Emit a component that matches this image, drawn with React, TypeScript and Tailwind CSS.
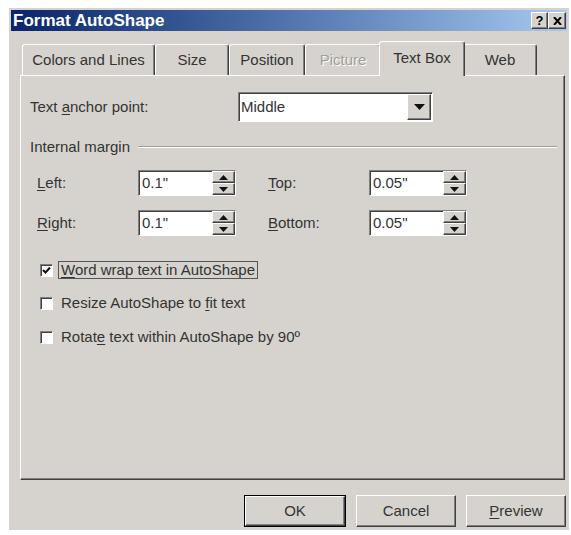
import React from 'react';

// classic 3D edges
const raised =
  'border border-t-white border-l-white border-r-[#404040] border-b-[#404040] shadow-[inset_-1px_-1px_0_#808080]';
const sunken =
  'border border-t-[#808080] border-l-[#808080] border-r-white border-b-white shadow-[inset_1px_1px_0_#404040]';

const Key = ({ children }: { children: React.ReactNode }) => (
  <span className="underline underline-offset-2 decoration-1">{children}</span>
);

type Tab = { label: string; width: string; selected?: boolean; disabled?: boolean };

const tabs: Tab[] = [
  { label: 'Colors and Lines', width: 'w-[133px]' },
  { label: 'Size', width: 'w-[74px]' },
  { label: 'Position', width: 'w-[76px]' },
  { label: 'Picture', width: 'w-[76px]', disabled: true },
  { label: 'Text Box', width: 'w-[86px]', selected: true },
  { label: 'Web', width: 'w-[74px]' },
];

const TabButton = ({ tab }: { tab: Tab }) => {
  if (tab.selected) {
    return (
      <div
        className={`relative z-10 -mx-[2px] -mb-px h-[35px] ${tab.width} flex items-center justify-center rounded-t-[3px] border border-b-0 border-t-white border-l-white border-r-[#404040] bg-[#d6d3ce] pb-[2px] shadow-[inset_-1px_0_0_#808080]`}
      >
        {tab.label}
      </div>
    );
  }
  return (
    <div
      className={`h-[31px] ${tab.width} flex items-center justify-center rounded-t-[3px] border border-b-0 border-t-white border-l-white border-r-[#404040] shadow-[inset_-1px_0_0_#808080] ${
        tab.disabled ? 'text-[#a19d98] [text-shadow:1px_1px_0_#ffffff]' : ''
      }`}
    >
      {tab.label}
    </div>
  );
};

const SpinBox = ({ value }: { value: string }) => (
  <div className={`flex h-[26px] w-[98px] bg-white ${sunken}`}>
    <div className="flex flex-1 items-center pl-[3px]">{value}</div>
    <div className="flex w-[23px] flex-col">
      <div className={`flex flex-1 items-center justify-center bg-[#d6d3ce] ${raised}`}>
        <svg width="9" height="5" viewBox="0 0 9 5">
          <path d="M4.5 0 L9 5 L0 5 Z" fill="#111" />
        </svg>
      </div>
      <div className={`flex flex-1 items-center justify-center bg-[#d6d3ce] ${raised}`}>
        <svg width="9" height="5" viewBox="0 0 9 5">
          <path d="M0 0 L9 0 L4.5 5 Z" fill="#111" />
        </svg>
      </div>
    </div>
  </div>
);

const CheckRow = ({
  checked,
  focused,
  children,
  className,
}: {
  checked?: boolean;
  focused?: boolean;
  children: React.ReactNode;
  className: string;
}) => (
  <div className={`flex h-[18px] items-center pl-[10px] ${className}`}>
    <div className={`flex h-[13px] w-[13px] items-center justify-center bg-white ${sunken}`}>
      {checked && (
        <svg width="9" height="9" viewBox="0 0 9 9">
          <path d="M1 4 L3.5 6.5 L8 1.5" stroke="#111" strokeWidth="2" fill="none" />
        </svg>
      )}
    </div>
    <div
      className={`ml-[5px] flex h-[18px] items-center px-[2px] ${
        focused ? 'border border-[#555]' : 'border border-transparent'
      }`}
    >
      {children}
    </div>
  </div>
);

const DialogButton = ({ children, isDefault }: { children: React.ReactNode; isDefault?: boolean }) => {
  const face = (
    <div className={`flex h-full w-full items-center justify-center bg-[#d6d3ce] ${raised}`}>{children}</div>
  );
  if (isDefault) {
    return <div className="h-[32px] w-[102px] border border-black">{face}</div>;
  }
  return <div className="h-[32px] w-[100px]">{face}</div>;
};

export default function App() {
  return (
    <div className="h-[535px] w-[571px] overflow-hidden bg-white pt-[8px] pl-[9px] font-['Liberation_Sans',Arial,sans-serif] text-[15px] text-[#333]">
      <div className="flex w-[560px] flex-col bg-[#d6d3ce] p-[2px] pb-[3px]">
        {/* caption */}
        <div className="flex h-[21px] items-center justify-between bg-linear-to-r from-[#0a246a] to-[#a6caf0] pl-[2px] pr-[1px]">
          <span className="text-[17px] font-bold text-white">Format AutoShape</span>
          <div className="flex">
            <div className={`flex h-[17px] w-[17px] items-center justify-center bg-[#d6d3ce] text-[13px] font-bold text-black ${raised}`}>
              ?
            </div>
            <div className={`flex h-[17px] w-[18px] items-center justify-center bg-[#d6d3ce] ${raised}`}>
              <svg width="9" height="8" viewBox="0 0 9 8">
                <path d="M1 0 L8 8 M8 0 L1 8" stroke="#000" strokeWidth="2" />
              </svg>
            </div>
          </div>
        </div>

        {/* tab strip */}
        <div className="ml-[9px] mt-[10px] flex h-[34px] items-end pl-[2px]">
          {tabs.map((tab) => (
            <TabButton key={tab.label} tab={tab} />
          ))}
        </div>

        {/* Text Box page */}
        <div className={`ml-[9px] flex h-[405px] w-[545px] flex-col pl-[9px] ${raised}`}>
          <div className="mt-[16px] flex h-[30px] items-center">
            <span className="w-[208px]">
              Text <Key>a</Key>nchor point:
            </span>
            <div className={`flex h-[30px] w-[195px] bg-white ${sunken}`}>
              <div className="flex flex-1 items-center pl-[2px]">Middle</div>
              <div className={`m-[1px] flex w-[24px] items-center justify-center bg-[#d6d3ce] ${raised}`}>
                <svg width="11" height="6" viewBox="0 0 11 6">
                  <path d="M0 0 L11 0 L5.5 6 Z" fill="#111" />
                </svg>
              </div>
            </div>
          </div>

          <div className="mt-[17px] flex h-[16px] items-center">
            <span>Internal margin</span>
            <div className="ml-[8px] h-[2px] w-[419px] border-t border-b border-t-[#a09c97] border-b-white" />
          </div>

          <div className="mt-[15px] flex h-[26px] items-center pl-[7px]">
            <span className="w-[101px]">
              <Key>L</Key>eft:
            </span>
            <SpinBox value={'0.1"'} />
            <span className="ml-[32px] w-[101px]">
              <Key>T</Key>op:
            </span>
            <SpinBox value={'0.05"'} />
          </div>

          <div className="mt-[14px] flex h-[26px] items-center pl-[7px]">
            <span className="w-[101px]">
              <Key>R</Key>ight:
            </span>
            <SpinBox value={'0.1"'} />
            <span className="ml-[32px] w-[101px]">
              <Key>B</Key>ottom:
            </span>
            <SpinBox value={'0.05"'} />
          </div>

          <CheckRow checked focused className="mt-[25px]">
            <span>
              <Key>W</Key>ord wrap text in AutoShape
            </span>
          </CheckRow>
          <CheckRow className="mt-[15px]">
            <span>
              Resize AutoShape to <Key>f</Key>it text
            </span>
          </CheckRow>
          <CheckRow className="mt-[16px]">
            <span>
              Rotat<Key>e</Key> text within AutoShape by 90º
            </span>
          </CheckRow>
        </div>

        {/* OK / Cancel / Preview */}
        <div className="mt-[15px] flex justify-end gap-[10px] pr-[1px]">
          <DialogButton isDefault>OK</DialogButton>
          <DialogButton>Cancel</DialogButton>
          <DialogButton>
            <span>
              <Key>P</Key>review
            </span>
          </DialogButton>
        </div>
      </div>
    </div>
  );
}
